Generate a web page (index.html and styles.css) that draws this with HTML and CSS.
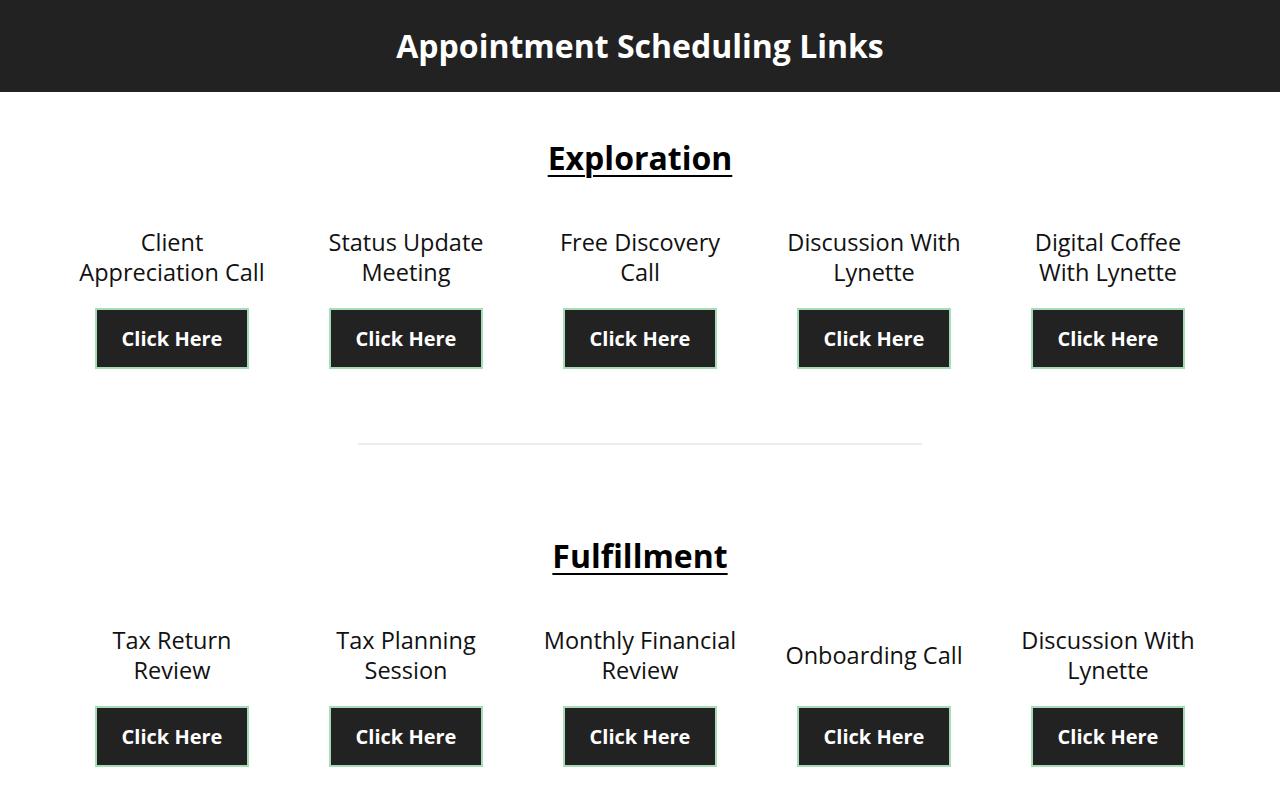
FILE: index.html
```html
<!DOCTYPE html>
<html lang="en">
<head>
<meta charset="utf-8">
<title>Appointment Scheduling Links</title>
<link rel="stylesheet" href="styles.css">
</head>
<body>
<header class="topbar">
  <h1 class="topbar-title">Appointment Scheduling Links</h1>
</header>

<main class="page">
  <section class="group">
    <h2 class="group-title">Exploration</h2>
    <div class="links">
      <div class="link-item">
        <p class="link-label">Client Appreciation Call</p>
        <a class="link-btn" href="#">Click Here</a>
      </div>
      <div class="link-item">
        <p class="link-label">Status Update Meeting</p>
        <a class="link-btn" href="#">Click Here</a>
      </div>
      <div class="link-item">
        <p class="link-label">Free Discovery Call</p>
        <a class="link-btn" href="#">Click Here</a>
      </div>
      <div class="link-item">
        <p class="link-label">Discussion With Lynette</p>
        <a class="link-btn" href="#">Click Here</a>
      </div>
      <div class="link-item">
        <p class="link-label">Digital Coffee With Lynette</p>
        <a class="link-btn" href="#">Click Here</a>
      </div>
    </div>
  </section>

  <hr class="divider">

  <section class="group group-second">
    <h2 class="group-title">Fulfillment</h2>
    <div class="links">
      <div class="link-item">
        <p class="link-label">Tax Return Review</p>
        <a class="link-btn" href="#">Click Here</a>
      </div>
      <div class="link-item">
        <p class="link-label">Tax Planning Session</p>
        <a class="link-btn" href="#">Click Here</a>
      </div>
      <div class="link-item">
        <p class="link-label">Monthly Financial Review</p>
        <a class="link-btn" href="#">Click Here</a>
      </div>
      <div class="link-item">
        <p class="link-label">Onboarding Call</p>
        <a class="link-btn" href="#">Click Here</a>
      </div>
      <div class="link-item">
        <p class="link-label">Discussion With Lynette</p>
        <a class="link-btn" href="#">Click Here</a>
      </div>
    </div>
  </section>
</main>
</body>
</html>
```

FILE: styles.css
```css
* {
  box-sizing: border-box;
}

body {
  margin: 0;
  font-family: "Open Sans", "Liberation Sans", sans-serif;
  color: #111;
  background: #fff;
}

.topbar {
  height: 92px;
  background: #222222;
  display: flex;
  align-items: center;
  justify-content: center;
}

.topbar-title {
  margin: 0;
  color: #fff;
  font-size: 32px;
  font-weight: 700;
  line-height: 1;
}

.page {
  width: 1170px;
  margin: 0 auto;
}

.group {
  padding-top: 44px;
}

.group-second {
  padding-top: 89px;
}

.group-title {
  margin: 0;
  text-align: center;
  font-size: 32px;
  font-weight: 700;
  line-height: 44px;
  text-decoration: underline;
  text-decoration-thickness: 2px;
  text-underline-offset: 5px;
  color: #000;
}

.links {
  display: grid;
  grid-template-columns: repeat(5, 1fr);
  margin-top: 47px;
}

.link-item {
  display: flex;
  flex-direction: column;
  align-items: center;
  padding: 0 18px;
}

.link-label {
  margin: 0;
  height: 60px;
  display: flex;
  align-items: center;
  justify-content: center;
  text-align: center;
  font-size: 23.5px;
  line-height: 30px;
  color: #111;
}

.link-btn {
  margin-top: 21px;
  width: 154px;
  height: 61px;
  display: flex;
  align-items: center;
  justify-content: center;
  background: #222222;
  border: 2px solid #a6dcb6;
  color: #fff;
  font-size: 20px;
  font-weight: 700;
  text-decoration: none;
}

.divider {
  width: 564px;
  margin: 74px auto 0;
  border: 0;
  height: 2px;
  background: #ececec;
}
```
